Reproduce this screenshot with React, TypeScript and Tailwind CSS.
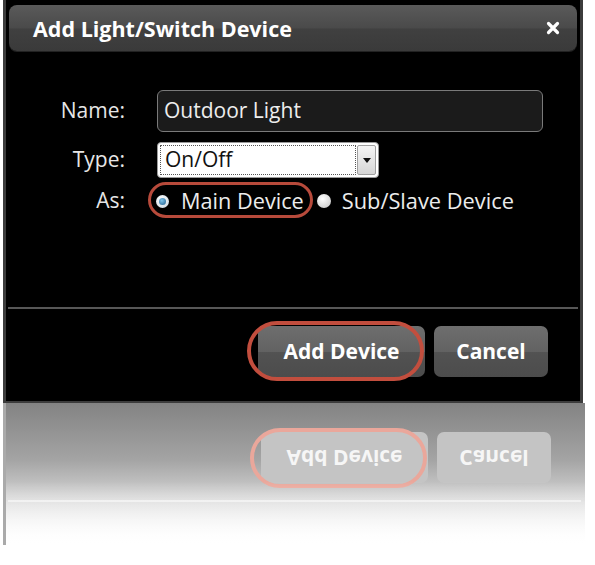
import React from "react";

const FONT = { fontFamily: '"Open Sans", "Noto Sans", Arial, sans-serif' };

function CloseIcon() {
  return (
    <svg width="14" height="14" viewBox="0 0 14 14" className="block">
      <path d="M2.5 2.5 L11.5 11.5 M11.5 2.5 L2.5 11.5" stroke="#fff" strokeWidth="3.2" strokeLinecap="round" />
    </svg>
  );
}

function Radio({ checked }: { checked?: boolean }) {
  return checked ? (
    <span className="flex h-[13px] w-[13px] shrink-0 items-center justify-center rounded-full bg-[radial-gradient(circle_at_40%_35%,#ffffff,#c9d6e0)] shadow-[0_0_1px_#000]">
      <span className="h-[7px] w-[7px] rounded-full bg-[radial-gradient(circle_at_40%_35%,#7fc4ea,#1f5f8f)]" />
    </span>
  ) : (
    <span className="block h-[14px] w-[14px] shrink-0 rounded-full bg-[radial-gradient(circle_at_40%_35%,#ffffff,#c4c4c4)]" />
  );
}

function Footer({ reflected }: { reflected?: boolean }) {
  const btn = reflected
    ? "bg-[#c4c4c4] text-[#f6f6f6]"
    : "bg-[linear-gradient(#6e6e6e,#626262_50%,#525252_52%,#4c4c4c)] text-white";
  return (
    <div className="flex flex-col">
      <div className={`mx-[2px] h-[2px] ${reflected ? "bg-[#ececec]" : "bg-[#575757]"}`} />
      <div className="mt-[17px] flex justify-end pr-[32px]">
        <div className="relative">
          <button className={`h-[51px] w-[167px] rounded-[7px] text-[21px] font-bold ${btn}`} style={FONT}>
            Add Device
          </button>
          <span
            className={`pointer-events-none absolute left-[-11px] top-[-5px] h-[60px] w-[177px] rounded-full border-[4px] ${
              reflected ? "border-[#eaa79b]" : "border-[#c24e3e]"
            }`}
          />
        </div>
        <button className={`ml-[9px] h-[51px] w-[114px] rounded-[7px] text-[21px] font-bold ${btn}`} style={FONT}>
          Cancel
        </button>
      </div>
      <div className={reflected ? "h-[29px]" : "h-[24px]"} />
    </div>
  );
}

export default function App() {
  return (
    <div className="h-[565px] w-[595px] bg-white pl-[3px]" style={FONT}>
      {/* dialog */}
      <div className="w-[580px] border-x-[3px] border-b-[2px] border-[#3c3c3c] bg-black pt-[5px]">
        <div className="mx-[3px] flex h-[46px] items-center justify-between rounded-[8px] bg-[linear-gradient(#5a5a5a,#4a4a4a_50%,#404040_52%,#3a3a3a)] pl-[24px] pr-[17px] shadow-[0_1px_0_#222]">
          <span className="pt-[3px] text-[21.5px] font-bold text-white">Add Light/Switch Device</span>
          <CloseIcon />
        </div>

        <div className="mt-[39px] flex items-center">
          <span className="w-[119px] text-right text-[21px] text-[#e6e6e6]">Name:</span>
          <div className="ml-[32px] flex h-[42px] w-[386px] items-center rounded-[6px] border border-[#7a7a7a] bg-[#1b1b1b] pl-[6px] text-[21px] text-[#ededed]">
            Outdoor Light
          </div>
        </div>

        <div className="mt-[10px] flex items-center">
          <span className="w-[119px] text-right text-[21px] text-[#e6e6e6]">Type:</span>
          <div className="ml-[32px] flex h-[36px] w-[222px] items-center rounded-[4px] border border-[#9a9a9a] bg-white p-[2px]">
            <div className="flex h-full flex-1 items-center border border-dotted border-[#555] pl-[4px] text-[21px] text-[#111]">
              On/Off
            </div>
            <div className="ml-[1px] flex h-full w-[19px] items-center justify-center rounded-[2px] border border-[#a0a0a0] bg-[linear-gradient(#f6f6f6,#d6d6d6)]">
              <svg width="8" height="5" viewBox="0 0 8 5">
                <path d="M0 0 H8 L4 5 Z" fill="#111" />
              </svg>
            </div>
          </div>
        </div>

        <div className="mt-[9px] flex h-[28px] items-center">
          <span className="w-[119px] text-right text-[21px] text-[#e6e6e6]">As:</span>
          <div className="relative ml-[31px] flex items-center">
            <Radio checked />
            <span className="ml-[12px] text-[21.7px] text-[#ececec]">Main Device</span>
            <span className="ml-[13px]">
              <Radio />
            </span>
            <span className="ml-[11px] text-[21.8px] text-[#ececec]">Sub/Slave Device</span>
            <span className="pointer-events-none absolute left-[-8px] top-[-3px] h-[36px] w-[165px] rounded-full border-[3.5px] border-[#b74a3b]" />
          </div>
        </div>

        <div className="mt-[92px]">
          <Footer />
        </div>
      </div>

      {/* reflection */}
      <div className="relative h-[142px] w-[582px] overflow-hidden border-l-[3px] border-[#aaaaaa] bg-[linear-gradient(#838383,#a4a4a4_40%,#d8d8d8_70%,#ffffff)]">
        <div className="flex h-full -scale-y-100 flex-col justify-end">
          <div className="pr-[2px]">
            <Footer reflected />
          </div>
        </div>
        <div className="absolute inset-0 bg-[linear-gradient(transparent_55%,#ffffff)]" />
      </div>
    </div>
  );
}
